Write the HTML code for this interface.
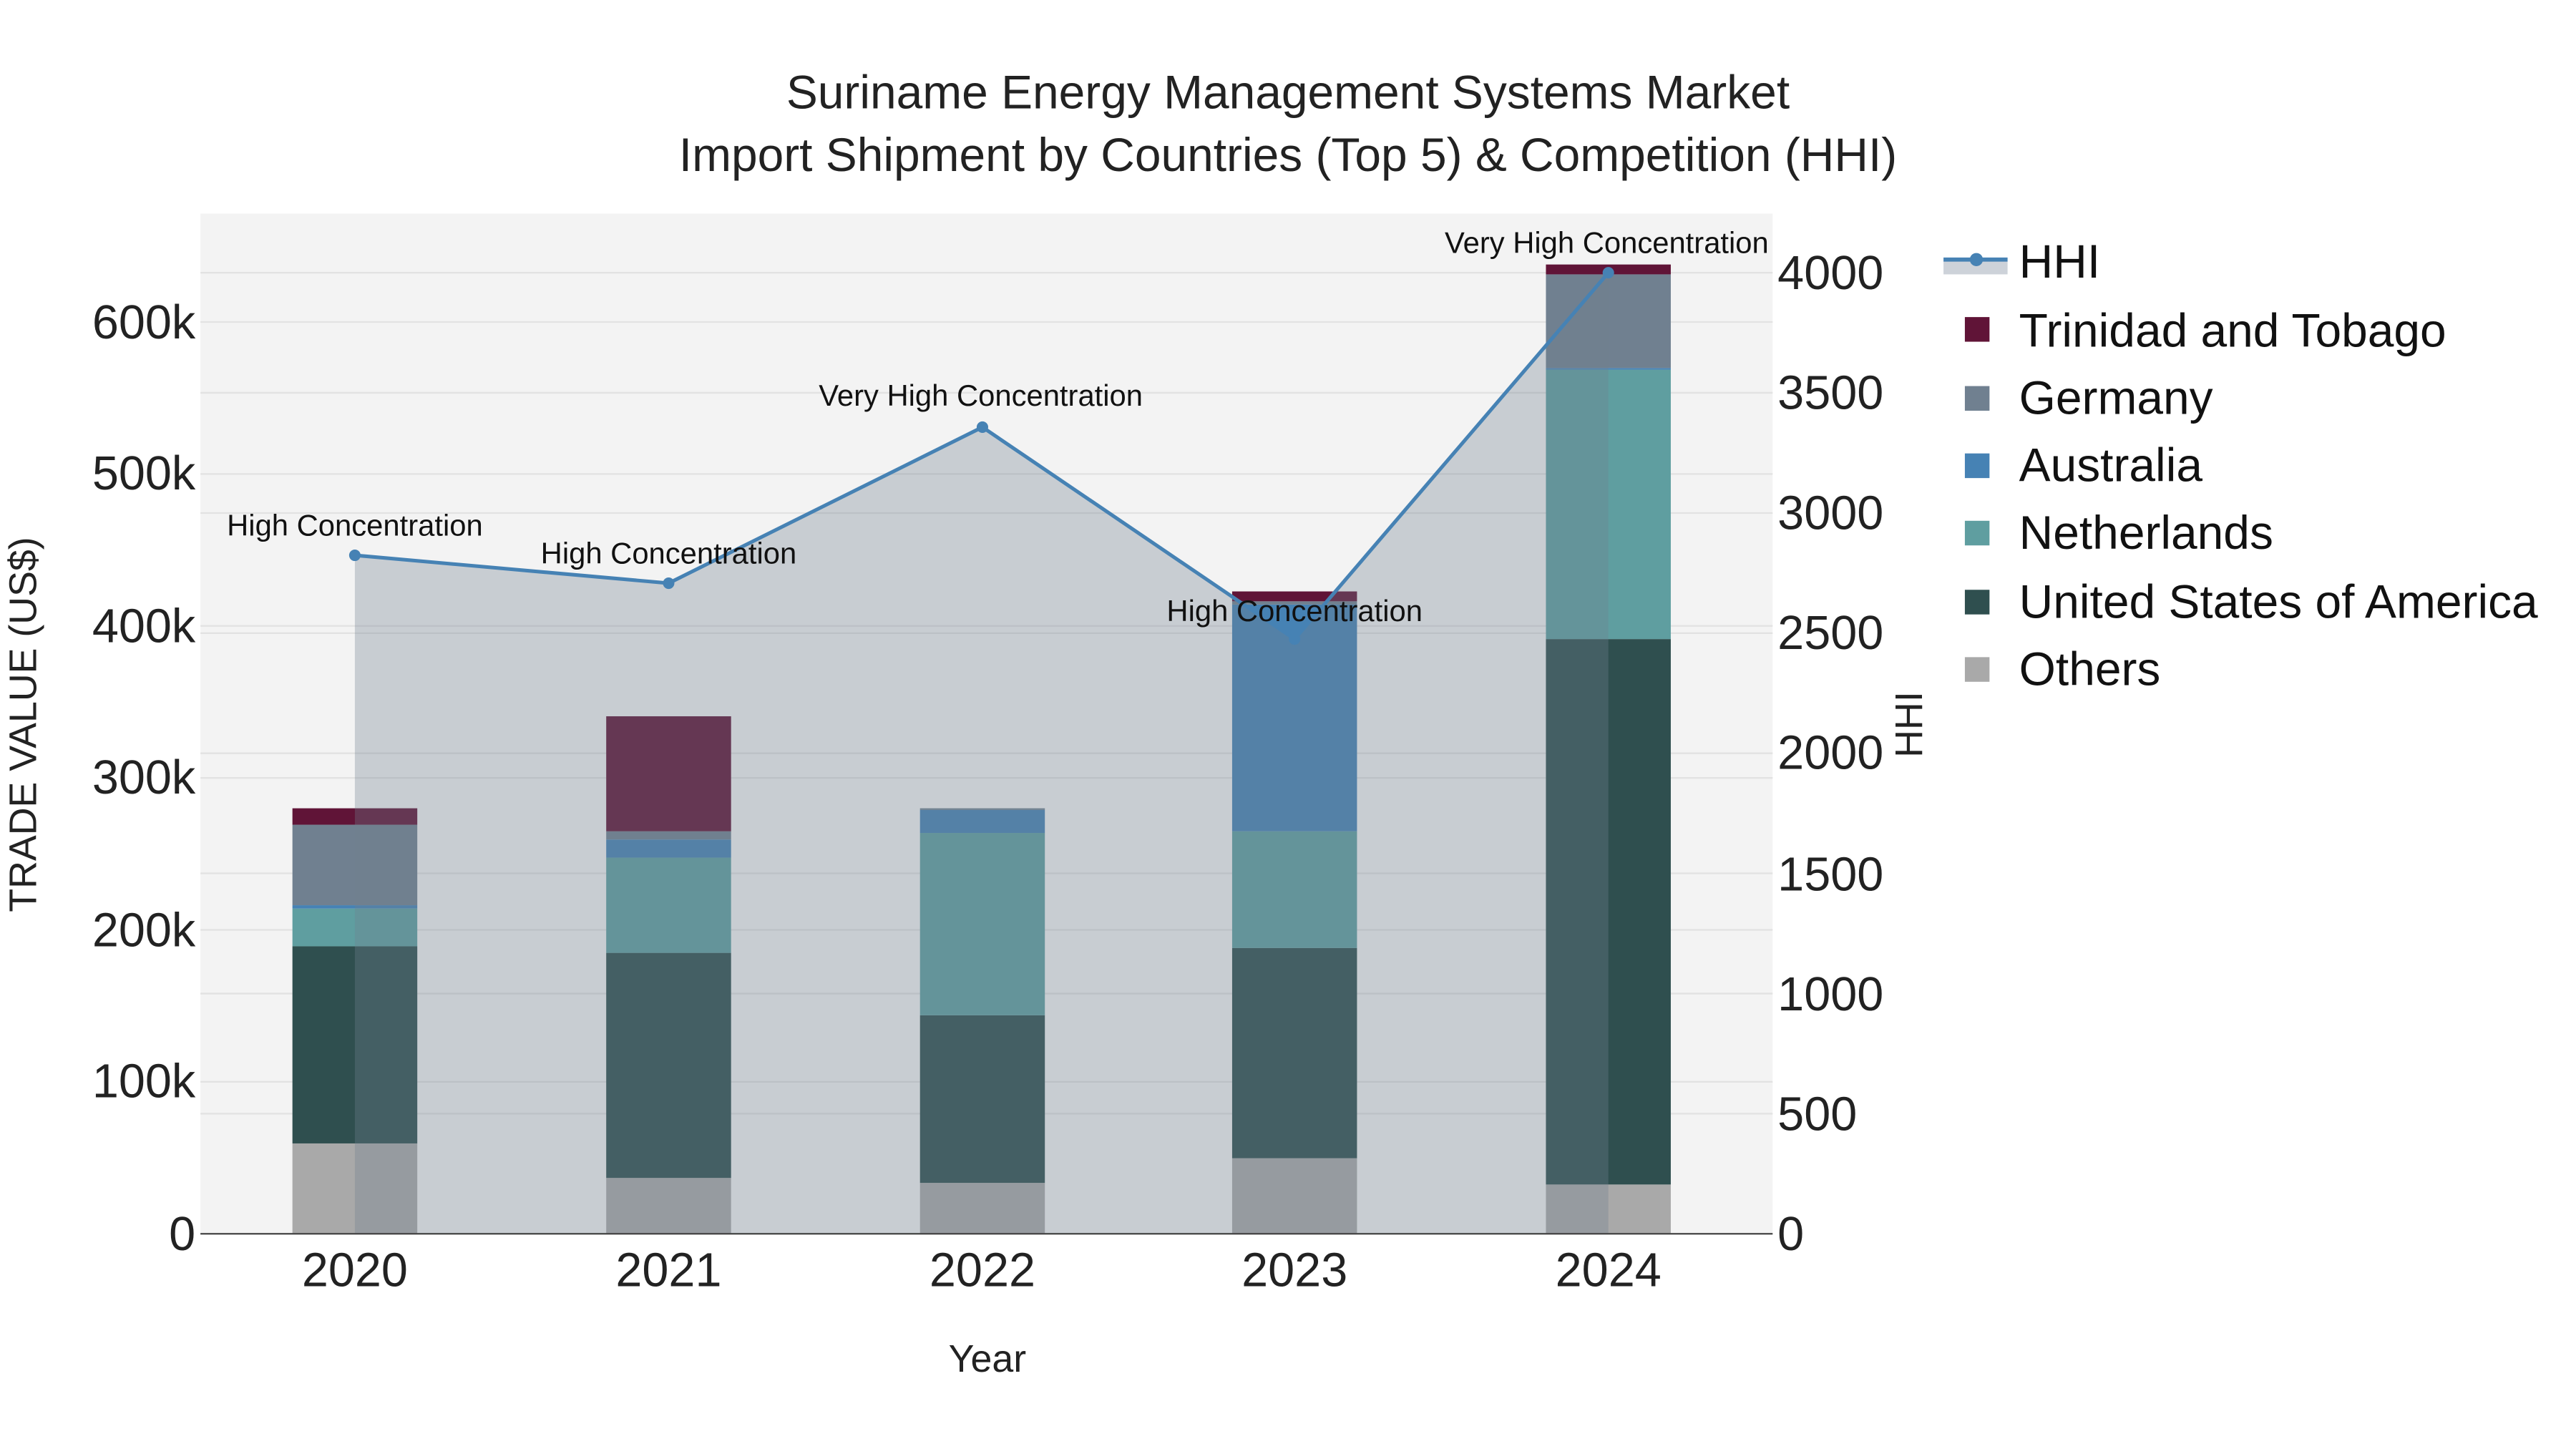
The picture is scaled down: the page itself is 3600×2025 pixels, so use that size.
<!DOCTYPE html>
<html><head><meta charset="utf-8"><style>html,body{margin:0;padding:0;background:#fff}svg{display:block}text{font-family:"Liberation Sans",Arial,sans-serif}</style></head><body>
<svg width="3600" height="2025" viewBox="0 0 1568 882" xmlns="http://www.w3.org/2000/svg">
<rect x="0" y="0" width="1568" height="882" fill="#fff"/>
<rect x="122" y="130" width="957" height="621" fill="#f3f3f3"/>
<g stroke="#e2e2e2" stroke-width="1">
<line x1="122" x2="1079" y1="658.5" y2="658.5"/><line x1="122" x2="1079" y1="566" y2="566"/><line x1="122" x2="1079" y1="473.5" y2="473.5"/><line x1="122" x2="1079" y1="381" y2="381"/><line x1="122" x2="1079" y1="288.5" y2="288.5"/><line x1="122" x2="1079" y1="196" y2="196"/>
<line x1="122" x2="1079" y1="677.9" y2="677.9"/><line x1="122" x2="1079" y1="604.8" y2="604.8"/><line x1="122" x2="1079" y1="531.6" y2="531.6"/><line x1="122" x2="1079" y1="458.5" y2="458.5"/><line x1="122" x2="1079" y1="385.4" y2="385.4"/><line x1="122" x2="1079" y1="312.3" y2="312.3"/><line x1="122" x2="1079" y1="239.1" y2="239.1"/><line x1="122" x2="1079" y1="166" y2="166"/>
</g>
<g>
<rect x="178" y="696" width="76" height="55" fill="#a9a9a9"/>
<rect x="178" y="576" width="76" height="120" fill="#2f4f4f"/>
<rect x="178" y="553" width="76" height="23" fill="#5f9ea0"/>
<rect x="178" y="551" width="76" height="2" fill="#4682b4"/>
<rect x="178" y="502" width="76" height="49" fill="#708090"/>
<rect x="178" y="492" width="76" height="10" fill="#601437"/>

<rect x="369" y="717" width="76" height="34" fill="#a9a9a9"/>
<rect x="369" y="580" width="76" height="137" fill="#2f4f4f"/>
<rect x="369" y="522" width="76" height="58" fill="#5f9ea0"/>
<rect x="369" y="511" width="76" height="11" fill="#4682b4"/>
<rect x="369" y="506" width="76" height="5" fill="#708090"/>
<rect x="369" y="436" width="76" height="70" fill="#601437"/>

<rect x="560" y="720" width="76" height="31" fill="#a9a9a9"/>
<rect x="560" y="618" width="76" height="102" fill="#2f4f4f"/>
<rect x="560" y="507" width="76" height="111" fill="#5f9ea0"/>
<rect x="560" y="493" width="76" height="14" fill="#4682b4"/>
<rect x="560" y="492" width="76" height="1" fill="#708090"/>

<rect x="750" y="705" width="76" height="46" fill="#a9a9a9"/>
<rect x="750" y="577" width="76" height="128" fill="#2f4f4f"/>
<rect x="750" y="506" width="76" height="71" fill="#5f9ea0"/>
<rect x="750" y="368" width="76" height="138" fill="#4682b4"/>
<rect x="750" y="366" width="76" height="2" fill="#708090"/>
<rect x="750" y="360" width="76" height="6" fill="#601437"/>

<rect x="941" y="721" width="76" height="30" fill="#a9a9a9"/>
<rect x="941" y="389" width="76" height="332" fill="#2f4f4f"/>
<rect x="941" y="225" width="76" height="164" fill="#5f9ea0"/>
<rect x="941" y="224" width="76" height="1" fill="#4682b4"/>
<rect x="941" y="167" width="76" height="57" fill="#708090"/>
<rect x="941" y="161" width="76" height="6" fill="#601437"/>
</g>
<polygon points="216,751 216,338 407,355 598,260 788,389 979,166 979,751" fill="#708090" fill-opacity="0.33"/>
<polyline points="216,338 407,355 598,260 788,389 979,166" fill="none" stroke="#4682b4" stroke-width="2.2"/>
<g fill="#4682b4"><circle cx="216" cy="338" r="3.5"/><circle cx="407" cy="355" r="3.5"/><circle cx="598" cy="260" r="3.5"/><circle cx="788" cy="389" r="3.5"/><circle cx="979" cy="166" r="3.5"/></g>
<line x1="122" x2="1079" y1="751" y2="751" stroke="#444" stroke-width="1"/>
<g font-size="18.2" fill="#111" text-anchor="middle">
<text x="216" y="326">High Concentration</text>
<text x="407" y="343">High Concentration</text>
<text x="597" y="247">Very High Concentration</text>
<text x="788" y="378">High Concentration</text>
<text x="978" y="154">Very High Concentration</text>
</g>
<g font-size="28.7" fill="#222" text-anchor="middle">
<text x="784" y="66">Suriname Energy Management Systems Market</text>
<text x="784" y="104">Import Shipment by Countries (Top 5) &amp; Competition (HHI)</text>
</g>
<g font-size="29" fill="#222" text-anchor="end">
<text x="119" y="761">0</text><text x="119" y="668">100k</text><text x="119" y="576">200k</text><text x="119" y="483">300k</text><text x="119" y="391">400k</text><text x="119" y="298">500k</text><text x="119" y="206">600k</text>
</g>
<g font-size="29" fill="#222" text-anchor="start">
<text x="1082" y="761">0</text><text x="1082" y="688">500</text><text x="1082" y="615">1000</text><text x="1082" y="542">1500</text><text x="1082" y="468">2000</text><text x="1082" y="395">2500</text><text x="1082" y="322">3000</text><text x="1082" y="249">3500</text><text x="1082" y="176">4000</text>
</g>
<g font-size="29" fill="#222" text-anchor="middle">
<text x="216" y="783">2020</text><text x="407" y="783">2021</text><text x="598" y="783">2022</text><text x="788" y="783">2023</text><text x="979" y="783">2024</text>
</g>
<text x="601" y="835" font-size="23.4" fill="#222" text-anchor="middle">Year</text>
<text transform="translate(22,441) rotate(-90)" font-size="23.4" fill="#222" text-anchor="middle">TRADE VALUE (US$)</text>
<text transform="translate(1170,441) rotate(-90)" font-size="23.4" fill="#222" text-anchor="middle">HHI</text>
<rect x="1183" y="159" width="39" height="8" fill="#cdd2d9"/>
<line x1="1183" x2="1222" y1="158" y2="158" stroke="#4682b4" stroke-width="2.5"/>
<circle cx="1203" cy="158" r="4" fill="#4682b4"/>
<g>
<rect x="1196" y="193" width="15" height="15" fill="#601437"/>
<rect x="1196" y="235" width="15" height="15" fill="#708090"/>
<rect x="1196" y="276" width="15" height="15" fill="#4682b4"/>
<rect x="1196" y="317" width="15" height="15" fill="#5f9ea0"/>
<rect x="1196" y="359" width="15" height="15" fill="#2f4f4f"/>
<rect x="1196" y="400" width="15" height="15" fill="#a9a9a9"/>
</g>
<g font-size="28.7" fill="#111">
<text x="1229" y="169">HHI</text>
<text x="1229" y="211">Trinidad and Tobago</text>
<text x="1229" y="252">Germany</text>
<text x="1229" y="293">Australia</text>
<text x="1229" y="334">Netherlands</text>
<text x="1229" y="376">United States of America</text>
<text x="1229" y="417">Others</text>
</g>
</svg>
</body></html>
